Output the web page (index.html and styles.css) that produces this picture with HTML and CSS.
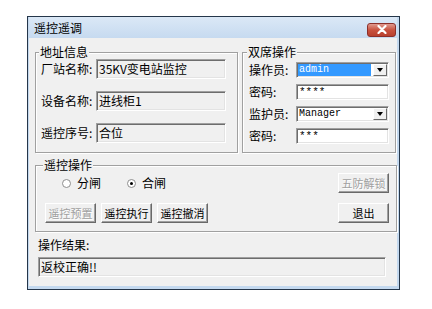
FILE: index.html
```html
<!DOCTYPE html>
<html lang="zh-CN">
<head>
    <meta charset="UTF-8">
    <title>遥控遥调</title>
    <link rel="stylesheet" href="styles.css">
</head>
<body>

    <div class="window">
        <div class="titlebar">
            <span class="title">遥控遥调</span>
            <span class="close-btn">
                <svg width="10" height="9" viewBox="0 0 10 9">
                    <path d="M1.5 1 L8.5 8 M8.5 1 L1.5 8" stroke="#fff" stroke-width="2.2" stroke-linecap="round"/>
                </svg>
            </span>
        </div>

        <div class="client">
            <div class="top-row">
                <fieldset class="group addr-group">
                    <legend>地址信息</legend>
                    <div class="addr-row">
                        <span class="addr-label">厂站名称:</span>
                        <div class="field readonly">35KV变电站监控</div>
                    </div>
                    <div class="addr-row">
                        <span class="addr-label">设备名称:</span>
                        <div class="field readonly">进线柜1</div>
                    </div>
                    <div class="addr-row">
                        <span class="addr-label">遥控序号:</span>
                        <div class="field readonly">合位</div>
                    </div>
                </fieldset>

                <fieldset class="group dual-group">
                    <legend>双席操作</legend>
                    <div class="dual-row">
                        <span class="dual-label">操作员:</span>
                        <div class="combo">
                            <span class="combo-value selected">admin</span>
                            <span class="combo-arrow"></span>
                        </div>
                    </div>
                    <div class="dual-row">
                        <span class="dual-label">密码:</span>
                        <div class="field edit mono">****</div>
                    </div>
                    <div class="dual-row">
                        <span class="dual-label">监护员:</span>
                        <div class="combo">
                            <span class="combo-value">Manager</span>
                            <span class="combo-arrow"></span>
                        </div>
                    </div>
                    <div class="dual-row">
                        <span class="dual-label">密码:</span>
                        <div class="field edit mono">***</div>
                    </div>
                </fieldset>
            </div>

            <fieldset class="group ctrl-group">
                <legend>遥控操作</legend>
                <div class="ctrl-row">
                    <div class="radios">
                        <span class="radio"><span class="radio-dot"></span>分闸</span>
                        <span class="radio"><span class="radio-dot checked"></span>合闸</span>
                    </div>
                    <button class="btn" disabled>五防解锁</button>
                </div>
                <div class="ctrl-row">
                    <div class="btn-group">
                        <button class="btn" disabled>遥控预置</button>
                        <button class="btn">遥控执行</button>
                        <button class="btn">遥控撤消</button>
                    </div>
                    <button class="btn">退出</button>
                </div>
            </fieldset>

            <div class="result-label">操作结果:</div>
            <div class="field readonly result">返校正确!!</div>
        </div>
    </div>

</body>
</html>
```

FILE: styles.css
```css
body {
    margin: 0;
    background: #fff;
    color: #000;
    font-family: "Noto Sans CJK SC", "Liberation Sans", sans-serif;
    font-size: 12px;
    line-height: 14px;
}

.window {
    margin: 16px 0 0 27px;
    width: 373px;
    height: 274px;
    box-sizing: border-box;
    border: 1px solid #25364a;
    background: #c4d9ef;
    padding: 0 2px 3px 1px;
    display: flex;
    flex-direction: column;
}

.titlebar {
    height: 21px;
    flex-shrink: 0;
    display: flex;
    align-items: center;
    justify-content: space-between;
    padding: 0 1px 0 5px;
    background: linear-gradient(#dbe8f6, #c6daf0);
}

.close-btn {
    width: 29px;
    height: 14px;
    margin-top: 4px;
    box-sizing: border-box;
    border: 1px solid #8c2f2a;
    border-radius: 3px;
    background: linear-gradient(#e09a8f, #c9523f 50%, #b8402e);
    display: flex;
    align-items: center;
    justify-content: center;
}

.client {
    flex: 1;
    min-height: 0;
    background: #f0f0f0;
    padding: 7px 0 0 6px;
}

/* group boxes */
.group {
    margin: 0;
    min-width: 0;
    border: 1px solid #a0a0a0;
    box-shadow: inset 1px 1px #fff, 1px 1px #fff;
}

.group legend {
    padding: 0 1px;
    margin-left: -2px;
    background: #f0f0f0;
    line-height: 14px;
}

.top-row {
    display: flex;
    gap: 4px;
}

.addr-group {
    width: 203px;
    box-sizing: border-box;
    padding: 0 11px 8px 5px;
    display: flex;
    flex-direction: column;
    gap: 12px;
}

.addr-row {
    display: flex;
    align-items: center;
}

.addr-label {
    width: 55px;
    flex-shrink: 0;
    white-space: nowrap;
}

.addr-row .field {
    flex: 1;
}

.dual-group {
    width: 154px;
    box-sizing: border-box;
    padding: 3px 6px 8px 6px;
    display: flex;
    flex-direction: column;
    gap: 6px;
}

.dual-row {
    display: flex;
    align-items: center;
}

.dual-label {
    width: 47px;
    flex-shrink: 0;
    white-space: nowrap;
}

/* text boxes */
.field {
    height: 20px;
    box-sizing: border-box;
    border: 1px solid;
    border-color: #a0a0a0 #fff #fff #a0a0a0;
    box-shadow: inset 1px 1px #6d6d6d, inset -1px -1px #e3e3e3;
    padding: 0 2px;
    line-height: 18px;
    white-space: nowrap;
    overflow: hidden;
}

.readonly {
    background: #f0f0f0;
}

.edit {
    flex: 1;
    height: 16px;
    line-height: 14px;
    background: #fff;
}

.mono {
    font-family: "Liberation Mono", monospace;
    font-size: 11px;
}

.combo {
    flex: 1;
    height: 16px;
    box-sizing: border-box;
    border: 1px solid;
    border-color: #a0a0a0 #fff #fff #a0a0a0;
    box-shadow: inset 1px 1px #6d6d6d, inset -1px -1px #e3e3e3;
    background: #fff;
    display: flex;
    padding: 1px;
}

.combo-value {
    flex: 1;
    margin-right: 2px;
    padding-left: 1px;
    font-family: "Liberation Mono", monospace;
    font-size: 10px;
    line-height: 12px;
}

.combo-value.selected {
    background: #3399ff;
    color: #fff;
}

.combo-arrow {
    width: 14px;
    box-sizing: border-box;
    border: 1px solid;
    border-color: #fff #696969 #696969 #fff;
    background: #f0f0f0;
    display: flex;
    align-items: center;
    justify-content: center;
}

.combo-arrow::after {
    content: "";
    border-left: 3px solid transparent;
    border-right: 3px solid transparent;
    border-top: 4px solid #000;
}

/* remote control group */
.ctrl-group {
    margin-top: 5px;
    width: 362px;
    box-sizing: border-box;
    padding: 1px 7px 8px 9px;
    display: flex;
    flex-direction: column;
    gap: 10px;
}

.ctrl-row {
    display: flex;
    align-items: center;
    justify-content: space-between;
}

.radios {
    display: flex;
    gap: 26px;
    padding-left: 17px;
}

.radio {
    display: flex;
    align-items: center;
    gap: 6px;
}

.radio-dot {
    width: 9px;
    height: 9px;
    box-sizing: border-box;
    border-radius: 50%;
    border: 1px solid #8e8e8e;
    background: #fff;
    display: flex;
    align-items: center;
    justify-content: center;
}

.radio-dot.checked::after {
    content: "";
    width: 3px;
    height: 3px;
    border-radius: 50%;
    background: #000;
}

.btn-group {
    display: flex;
    gap: 5px;
}

.btn {
    width: 51px;
    height: 20px;
    box-sizing: border-box;
    padding: 0;
    margin: 0;
    font: inherit;
    font-size: 11px;
    color: #000;
    background: #f0f0f0;
    border: 1px solid;
    border-color: #fff #696969 #696969 #fff;
    box-shadow: inset -1px -1px #a0a0a0;
    white-space: nowrap;
}

.btn:disabled {
    color: #a0a0a0;
    text-shadow: 1px 1px #fff;
}

.result-label {
    margin: 6px 0 0 3px;
}

.result {
    margin: 5px 0 0 3px;
    width: 348px;
}
```
